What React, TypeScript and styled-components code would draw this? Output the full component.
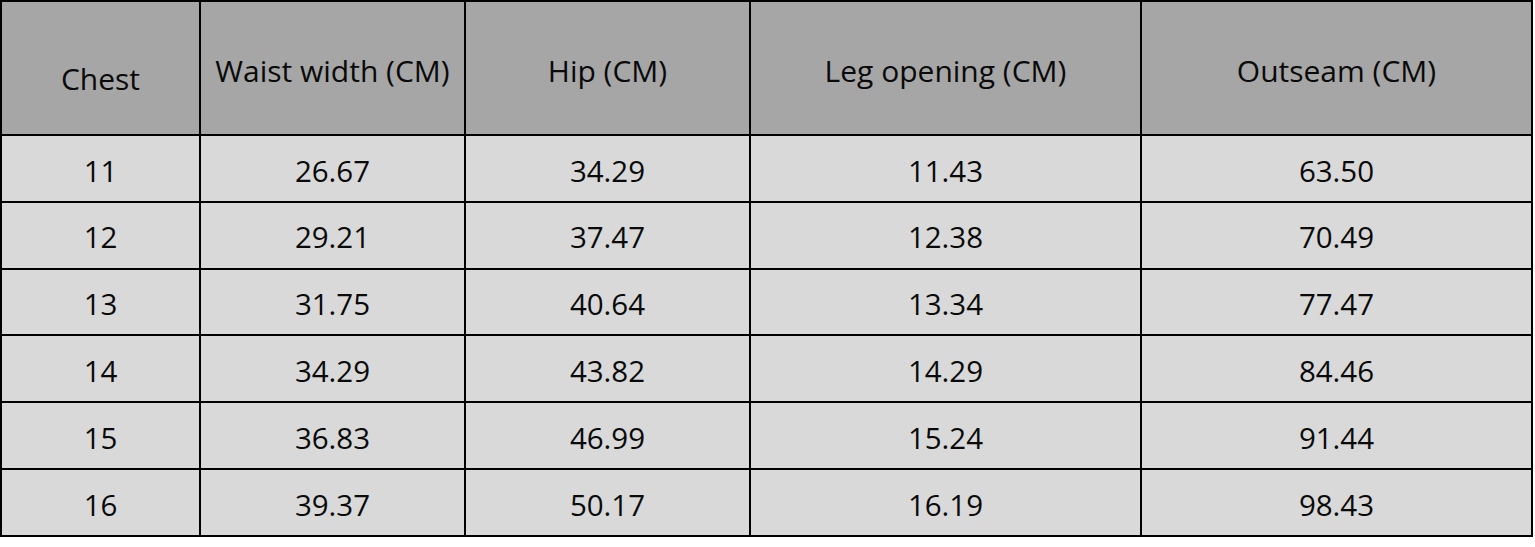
import styled, { createGlobalStyle } from "styled-components";

const GlobalStyle = createGlobalStyle`
  html, body {
    margin: 0;
    padding: 0;
    background: #ffffff;
  }
  body {
    font-family: "Open Sans", "Noto Sans", sans-serif;
  }
`;

const headers = [
  { label: "Chest", offset: 22 },
  { label: "Waist width (CM)", offset: 5 },
  { label: "Hip (CM)", offset: 5 },
  { label: "Leg opening (CM)", offset: 5 },
  { label: "Outseam (CM)", offset: 5 },
];

const rows = [
  ["11", "26.67", "34.29", "11.43", "63.50"],
  ["12", "29.21", "37.47", "12.38", "70.49"],
  ["13", "31.75", "40.64", "13.34", "77.47"],
  ["14", "34.29", "43.82", "14.29", "84.46"],
  ["15", "36.83", "46.99", "15.24", "91.44"],
  ["16", "39.37", "50.17", "16.19", "98.43"],
];

export default function App() {
  return (
    <>
      <GlobalStyle />
      <SizeTable>
        {headers.map((h) => (
          <HeadCell key={h.label} $offset={h.offset}>
            {h.label}
          </HeadCell>
        ))}
        {rows.map((row, i) =>
          row.map((value, j) => <BodyCell key={`${i}-${j}`}>{value}</BodyCell>)
        )}
      </SizeTable>
    </>
  );
}

const SizeTable = styled.div`
  display: grid;
  grid-template-columns: 197px 263px 283px 389px 389px;
  grid-template-rows: 132px repeat(6, 64.8px);
  gap: 2px;
  padding: 2px;
  width: fit-content;
  background: #000000;
`;

const Cell = styled.div`
  display: flex;
  align-items: center;
  justify-content: center;
  color: #0a0a0a;
  line-height: 1;
  white-space: nowrap;
`;

const HeadCell = styled(Cell)<{ $offset: number }>`
  background: #a6a6a6;
  font-size: 30px;
  padding-top: ${(p) => p.$offset}px;
`;

const BodyCell = styled(Cell)`
  background: #d9d9d9;
  font-size: 29.5px;
  padding-top: 4px;
`;
